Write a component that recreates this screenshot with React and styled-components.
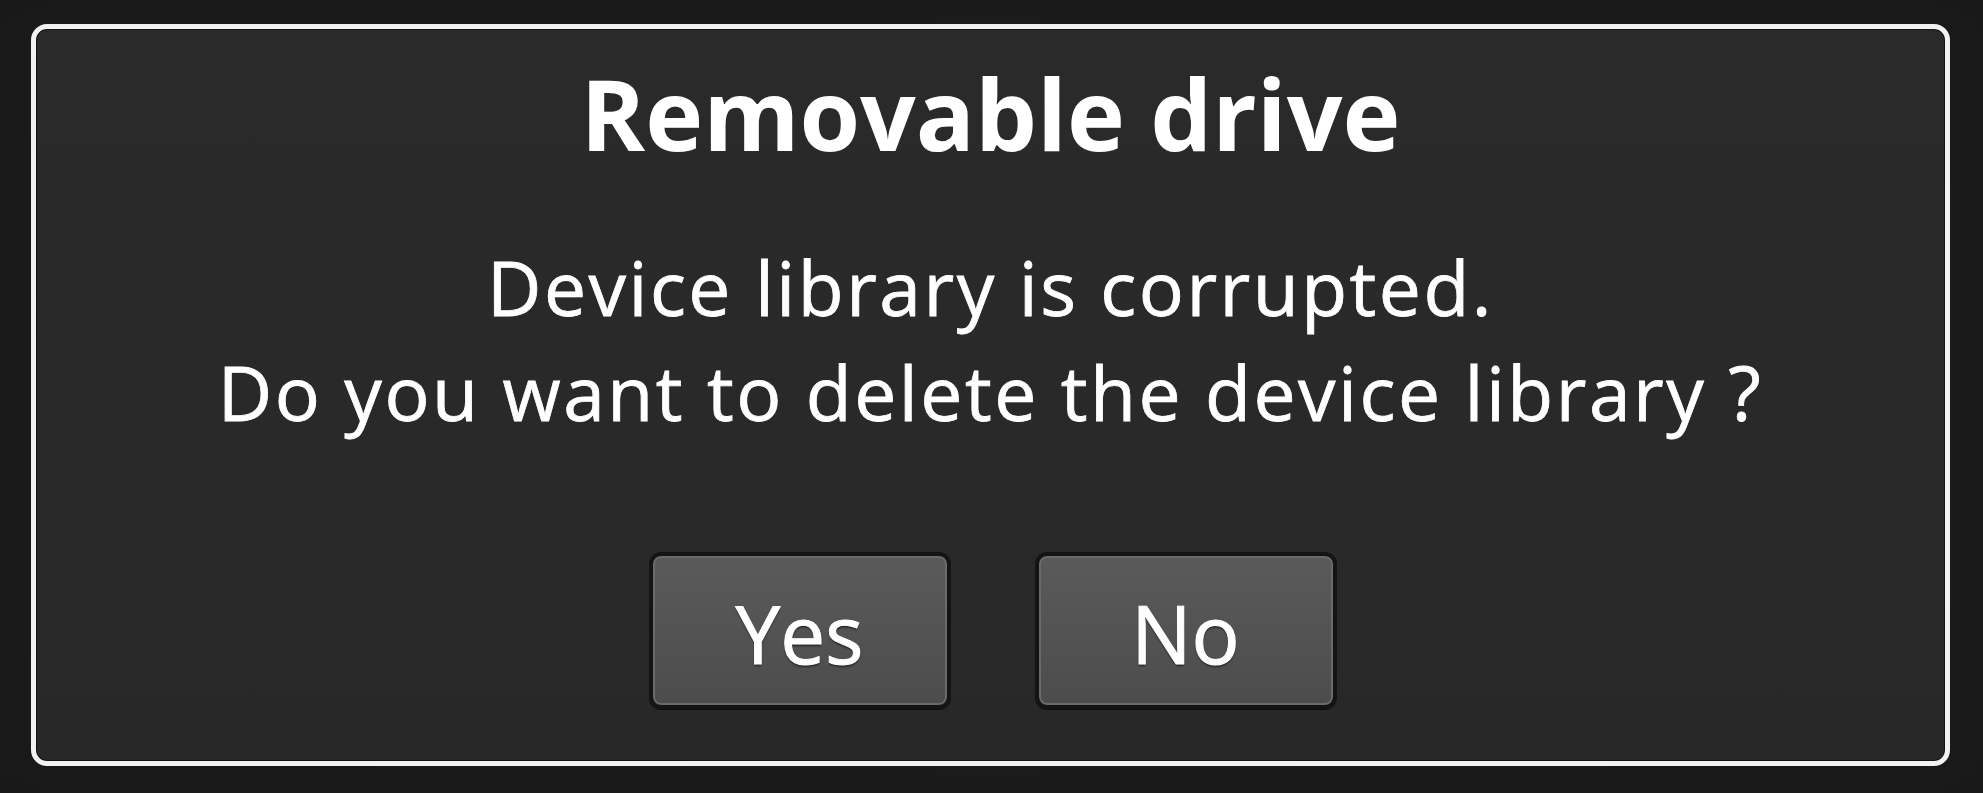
import React from "react";
import styled, { createGlobalStyle } from "styled-components";

const GlobalStyle = createGlobalStyle`
  html, body {
    margin: 0;
    padding: 0;
    background: #1b1b1b;
  }
  body {
    font-family: "Open Sans", "Noto Sans", sans-serif;
  }
`;

const Screen = styled.div`
  width: 1983px;
  height: 793px;
  box-sizing: border-box;
  padding: 24px 33px 27px 31px;
  background: radial-gradient(ellipse at center, #1e1e1e 0%, #191919 100%);
`;

const Dialog = styled.div`
  box-sizing: border-box;
  height: 100%;
  border: 5px solid #f2f2f2;
  border-radius: 16px;
  background: linear-gradient(180deg, #2a2a2a 0%, #282828 100%);
  box-shadow: inset 0 0 0 1px #141414;
  display: flex;
  flex-direction: column;
  align-items: center;
  padding-top: 26px;
  color: #ffffff;
`;

const Title = styled.h1`
  margin: 0;
  font-size: 98px;
  line-height: 1.2;
  font-weight: 700;
`;

const Message = styled.p`
  margin: 62px 0 0;
  font-size: 75px;
  line-height: 105px;
  font-weight: 400;
  letter-spacing: 2.5px;
  -webkit-text-stroke: 0.8px #ffffff;
  text-align: center;
`;

const ButtonRow = styled.div`
  display: flex;
  gap: 84px;
  margin-top: 107px;
  padding-left: 4px;
`;

const Button = styled.button`
  box-sizing: border-box;
  width: 302px;
  height: 157px;
  border: 4px solid #141414;
  border-radius: 12px;
  background: linear-gradient(180deg, #5a5a5a 0%, #4c4c4c 100%);
  box-shadow: inset 0 0 0 2px #6a6a6a, 0 1px 0 #0e0e0e;
  color: #ffffff;
  font-family: "Open Sans", "Noto Sans", sans-serif;
  font-size: 80px;
  font-weight: 400;
  line-height: 1;
  -webkit-text-stroke: 1px #ffffff;
  display: flex;
  align-items: center;
  justify-content: center;
  padding: 6px 0 0;
  text-shadow: 0 2px 2px rgba(0, 0, 0, 0.55);
  cursor: pointer;
`;

export default function App() {
  return (
    <>
      <GlobalStyle />
      <Screen>
        <Dialog>
          <Title>Removable drive</Title>
          <Message>
            Device library is corrupted.
            <br />
            Do you want to delete the device library ?
          </Message>
          <ButtonRow>
            <Button>Yes</Button>
            <Button>No</Button>
          </ButtonRow>
        </Dialog>
      </Screen>
    </>
  );
}
